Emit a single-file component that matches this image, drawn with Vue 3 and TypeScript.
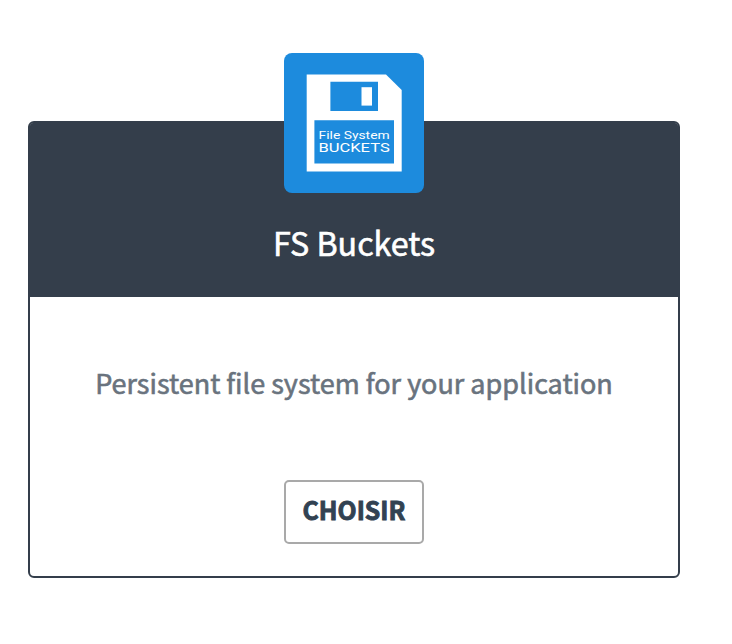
<script setup lang="ts">
interface Addon {
  name: string
  description: string
  action: string
}

const addon: Addon = {
  name: 'FS Buckets',
  description: 'Persistent file system for your application',
  action: 'CHOISIR',
}
</script>

<template>
  <main class="page">
    <article class="card">
      <header class="card-header">
        <svg class="logo" viewBox="0 0 140 140" role="img">
          <rect width="140" height="140" rx="8" fill="#1d8bdd" />
          <path d="M22.7 21.6H102L117.7 37V118.6H22.7Z" fill="#fff" />
          <path d="M46.4 28.7H94V58H46.4ZM30.4 67.3H110V110.6H30.4Z" fill="#1d8bdd" />
          <rect x="77.5" y="34.2" width="10.5" height="18.4" fill="#fff" />
          <text class="logo-text">
            <tspan x="34.6" y="86" textLength="71" lengthAdjust="spacingAndGlyphs" font-size="11">File System</tspan>
            <tspan x="34.4" y="99.3" textLength="71.4" lengthAdjust="spacingAndGlyphs" font-size="12.6">BUCKETS</tspan>
          </text>
        </svg>
        <h1 class="title">{{ addon.name }}</h1>
      </header>
      <div class="card-body">
        <p class="description">{{ addon.description }}</p>
        <button class="choose" type="button">{{ addon.action }}</button>
      </div>
    </article>
  </main>
</template>

<style>
body {
  background: #fff;
}
</style>

<style scoped>
.page {
  box-sizing: border-box;
  height: 644px;
  padding: 121px 52px 66px 28px;
  font-family: 'Noto Sans CJK SC', sans-serif;
}
.card {
  box-sizing: border-box;
  height: 457px;
  border: 2px solid #343e4b;
  border-radius: 6px;
}
.card-header {
  box-sizing: border-box;
  height: 174px;
  display: flex;
  flex-direction: column;
  align-items: center;
  background: #343e4b;
  border-radius: 3px 3px 0 0;
}
.logo {
  flex: none;
  width: 140px;
  height: 140px;
  margin-top: -70px;
}
.logo-text {
  fill: #fff;
  font-family: Roboto, sans-serif;
}
.title {
  margin: 24px 0 0;
  color: #fff;
  font-size: 32.2px;
  font-weight: 400;
  line-height: 50px;
  -webkit-text-stroke: 0.6px #fff;
}
.card-body {
  display: flex;
  flex-direction: column;
  align-items: center;
  padding-top: 65px;
}
.description {
  margin: 0;
  color: #69737e;
  font-size: 27px;
  font-weight: 400;
  line-height: 42px;
  white-space: nowrap;
  -webkit-text-stroke: 0.6px #69737e;
}
.choose {
  box-sizing: border-box;
  width: 140px;
  height: 64px;
  margin-top: 76px;
  padding: 0 0 6px;
  border: 2px solid #a9a9a9;
  border-radius: 5px;
  background: #fff;
  color: #324252;
  font-family: inherit;
  font-size: 24.8px;
  font-weight: 700;
  line-height: 36px;
  -webkit-text-stroke: 0.9px #324252;
}
</style>
